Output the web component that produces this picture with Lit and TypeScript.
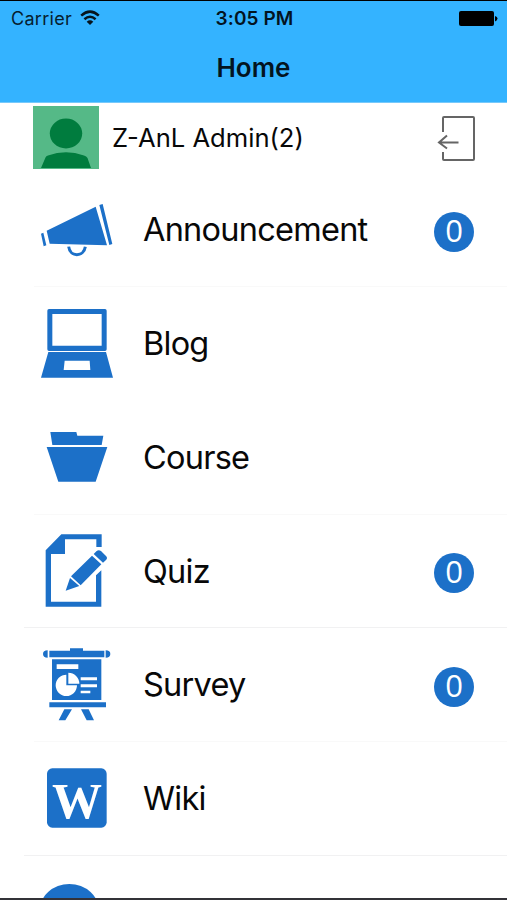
import { LitElement, html, css, svg, nothing } from "lit";
import { customElement, property } from "lit/decorators.js";

const icons: Record<string, unknown> = {
  announcement: svg`<g transform="translate(0 66)">
    <path d="M50 107 197 35 231 151 59 146Z M208 30 218 27 247 147 238 150Z M33 116 40 113 49 151 41 154Z"/>
    <path d="M116 155C120 187 161 187 166 155" fill="none" stroke="#1c70c8" stroke-width="9"/></g>`,
  blog: svg`<g transform="translate(0 39)">
    <path fill-rule="evenodd" d="M57 27H225Q230 27 230 32V148Q230 153 225 153H57Q52 153 52 148V32Q52 27 57 27ZM67 42V137H215V42Z"/>
    <path fill-rule="evenodd" d="M55 156H228L249 233H33ZM104 182 101 210H181L179 182Z"/></g>`,
  course: svg`<g transform="translate(0 57)">
    <path d="M61 36H139L142 47H220L215 75H67ZM50 81H232L197 185H85Z"/></g>`,
  quiz: svg`<g transform="translate(0 30)">
    <path d="M94 28H215V66H199V43H105V87H63V230H198V151L214 136V245H47V76Z"/>
    <path d="M107 197 120 159 148 183ZM123 154 186 92 214 118 152 181ZM191 87 200 78Q206 73 213 78L228 93Q234 99 228 105L219 113Z"/></g>`,
  survey: svg`<g transform="translate(0 36)">
    <path d="M120 25H159V32H223V52H58V32H120ZM53 31V53Q39 53 39 42Q39 31 53 31ZM227 31V53Q241 53 241 42Q241 31 227 31ZM66 58H214V180H66ZM58 187H228V202H58ZM103 208H126L106 241H86ZM153 208H176L192 241H170Z"/>
    <path fill="#fff" d="M80 73H145V87H80ZM109 104V136H141A32 32 0 1 1 109 104ZM115 98A33 33 0 0 1 148 131H115ZM152 112H201V121H152ZM152 133H201V142H152ZM152 152H181V160H152Z"/></g>`,
  wiki: svg`<g transform="translate(0 54)">
    <rect x="51" y="25" width="179" height="178" rx="16"/>
    <text class="w" x="66" y="173" textLength="150" lengthAdjust="spacingAndGlyphs">W</text></g>`,
  more: svg`<ellipse cx="118" cy="167" rx="90" ry="83"/>`,
};

@customElement("menu-row")
class MenuRow extends LitElement {
  @property() icon = "";
  @property() label = "";
  @property() count?: string;

  static styles = css`
    :host { display: flex; align-items: center; position: relative; box-sizing: border-box; padding: 0 33px 0 30px; overflow: hidden; }
    .icon { width: 100px; height: 114px; flex: none; align-self: flex-start; fill: #1c70c8; }
    .w { font: bold 154px "Liberation Serif", serif; fill: #fff; }
    .label { flex: 1; padding-left: 13px; font-size: 32.5px; letter-spacing: -0.75px; line-height: 40px; white-space: nowrap; }
    .badge { width: 40px; height: 40px; margin-top: 3px; border-radius: 50%; background: #1c70c8; color: #fff;
      font: 31px/37px "Open Sans", sans-serif; text-align: center; }
  `;

  render() {
    return html`
      <svg class="icon" viewBox="0 0 300 342">${icons[this.icon]}</svg>
      <span class="label">${this.label}</span>
      ${this.count ? html`<span class="badge">${this.count}</span>` : nothing}
    `;
  }
}

@customElement("app-root")
class AppRoot extends LitElement {
  static styles = css`
    :host { display: flex; flex-direction: column; box-sizing: border-box; width: 507px; height: 900px; overflow: hidden;
      background: #fff; color: #080808; font-family: Inter, sans-serif; border-top: 1px solid #000; border-bottom: 2px solid #333238; }
    .top { height: 102px; flex: none; background: #34b3ff; border-bottom: 1px solid #77c9fb; box-sizing: border-box; }
    .status { display: grid; grid-template-columns: 1fr auto 1fr; align-items: center; height: 34px; padding: 0 9px 0 11px; color: #06202f; }
    .carrier { display: flex; align-items: center; gap: 8px; font-size: 18px; letter-spacing: 0.3px; }
    .time { font-size: 19px; font-weight: 600; color: #03141f; letter-spacing: 0.1px; }
    .battery { justify-self: end; }
    .title { margin: 0; text-align: center; font-size: 26px; line-height: 32px; padding-top: 17px; font-weight: 600; color: #03141f; }
    .user { display: flex; align-items: flex-start; height: 70px; flex: none; padding: 3px 30px 0 33px; box-sizing: border-box; }
    .name { flex: 1; margin-left: 13px; padding-top: 16px; font-size: 25.6px; line-height: 32px; white-space: nowrap; }
    .exit { margin-top: 8px; }
    .row { height: 114px; flex: none; }
    .row.short { height: 113px; }
    .row.last { height: auto; flex: 1; min-height: 0; }
    .line { background: linear-gradient(#f1f1f2, #f1f1f2) 24px 100% / 483px 1px no-repeat; }
    .faint { background: linear-gradient(#f9f9f9, #f9f9f9) 34px 100% / 473px 1px no-repeat; }
  `;

  render() {
    return html`
      <header class="top">
        <div class="status">
          <span class="carrier">Carrier
            <svg width="20" height="16" viewBox="0 0 20 16" fill="none" stroke="#06141d" stroke-width="2.5">
              <path d="M1.2 5.600Q10-2.300 18.800 5.600M4.400 9.200Q10 4.400 15.600 9.200"/>
              <path d="M10 15 6.700 11.700Q10 8.800 13.300 11.700Z" fill="#06141d" stroke="none"/>
            </svg>
          </span>
          <span class="time">3:05 PM</span>
          <svg class="battery" width="39" height="15" viewBox="0 0 39 15">
            <rect width="35" height="15" rx="2"/><path d="M36 5Q38.500 5.500 38.500 7.500T36 10.500Z"/>
          </svg>
        </div>
        <h1 class="title">Home</h1>
      </header>
      <section class="user">
        <svg width="66" height="63" viewBox="0 0 66 63">
          <rect width="66" height="63" fill="#55b987"/>
          <ellipse cx="33" cy="27.500" rx="16.200" ry="15" fill="#007c3e"/>
          <path d="M8 62 12.500 51.500Q13 50 15 49.500Q33 43 51 49.500Q53.500 50 54.500 52L58 62Z" fill="#007c3e"/>
        </svg>
        <span class="name">Z-AnL Admin(2)</span>
        <svg class="exit" width="40" height="48" viewBox="0 0 40 48" fill="none" stroke="#656565" stroke-width="2">
          <path d="M6 18V4Q6 3 7 3H36Q37 3 37 4V45Q37 46 36 46H7Q6 46 6 45V38M21.500 28.500H2M10 21.500 2 28.500 10 34.500"/>
        </svg>
      </section>
      <menu-row class="row faint" icon="announcement" label="Announcement" count="0"></menu-row>
      <menu-row class="row" icon="blog" label="Blog"></menu-row>
      <menu-row class="row faint" icon="course" label="Course"></menu-row>
      <menu-row class="row short line" icon="quiz" label="Quiz" count="0"></menu-row>
      <menu-row class="row faint" icon="survey" label="Survey" count="0"></menu-row>
      <menu-row class="row line" icon="wiki" label="Wiki"></menu-row>
      <menu-row class="row last" icon="more"></menu-row>
    `;
  }
}
